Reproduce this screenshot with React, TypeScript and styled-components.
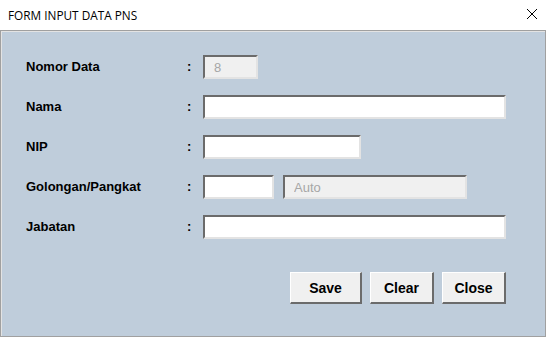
import React from 'react';
import styled, { createGlobalStyle } from 'styled-components';

const GlobalStyle = createGlobalStyle`
  html, body {
    margin: 0;
    padding: 0;
    background: #ffffff;
  }
  body {
    font-family: 'Liberation Sans', Arial, sans-serif;
  }
`;

const Window = styled.div`
  width: 546px;
  height: 337px;
  display: flex;
  flex-direction: column;
  background: #ffffff;
  overflow: hidden;
`;

const TitleBar = styled.div`
  height: 30px;
  flex: 0 0 30px;
  display: flex;
  align-items: center;
  justify-content: space-between;
  padding: 0 7px 0 8px;
  box-sizing: border-box;
`;

const Title = styled.span`
  font-family: 'Open Sans', 'Liberation Sans', sans-serif;
  font-size: 11.8px;
  color: #000;
  margin-top: -1px;
`;

const CloseX = styled.button`
  width: 14px;
  height: 14px;
  border: 0;
  padding: 0;
  background: transparent;
  margin-top: -2px;
  display: flex;
`;

const Panel = styled.div`
  flex: 1;
  background: #bfcddb;
  border: 1px solid #a0a0a0;
  box-shadow: inset 1px 1px 0 #e3e3e3;
  box-sizing: border-box;
  padding: 24px 39px 32px 25px;
  display: flex;
  flex-direction: column;
`;

const Form = styled.div`
  display: grid;
  grid-template-columns: 161px 16px 1fr;
  row-gap: 16px;
  align-items: center;
`;

const Label = styled.label`
  font-weight: bold;
  font-size: 13px;
  color: #000;
  margin-top: -2px;
`;

const Colon = styled.span`
  font-weight: bold;
  font-size: 13px;
  color: #000;
  margin-top: -2px;
`;

const FieldGroup = styled.div`
  display: flex;
  gap: 9px;
  height: 24px;
`;

const Input = styled.input<{ $w: number }>`
  width: ${p => p.$w}px;
  height: 24px;
  box-sizing: border-box;
  margin: 0;
  padding: 0 0 0 9px;
  font-family: 'Liberation Sans', Arial, sans-serif;
  font-size: 13px;
  color: #000;
  background: #ffffff;
  border-style: solid;
  border-width: 2px;
  border-color: #6b6b6b #e3e3e3 #e3e3e3 #6b6b6b;
  outline: none;

  &:disabled {
    background: #f0f0f0;
    color: #a6a6a6;
  }
`;

const ButtonRow = styled.div`
  margin-top: auto;
  display: flex;
  justify-content: flex-end;
  gap: 8px;
`;

const Button = styled.button<{ $w: number }>`
  width: ${p => p.$w}px;
  height: 32px;
  box-sizing: border-box;
  background: #f0f0f0;
  border-style: solid;
  border-width: 1px 2px 2px 1px;
  border-color: #ffffff #6b6b6b #6b6b6b #ffffff;
  font-family: 'Liberation Sans', Arial, sans-serif;
  font-weight: bold;
  font-size: 14px;
  color: #000;
  padding: 0;
`;

type Row = {
  label: string;
  fields: { w: number; value?: string; disabled?: boolean }[];
};

const rows: Row[] = [
  { label: 'Nomor Data', fields: [{ w: 55, value: '8', disabled: true }] },
  { label: 'Nama', fields: [{ w: 303 }] },
  { label: 'NIP', fields: [{ w: 158 }] },
  {
    label: 'Golongan/Pangkat',
    fields: [{ w: 71 }, { w: 184, value: 'Auto', disabled: true }],
  },
  { label: 'Jabatan', fields: [{ w: 303 }] },
];

const App: React.FC = () => {
  return (
    <>
      <GlobalStyle />
      <Window>
        <TitleBar>
          <Title>FORM INPUT DATA PNS</Title>
          <CloseX aria-label="Close">
            <svg width="14" height="14" viewBox="0 0 14 14">
              <path d="M2 2 L12 12 M12 2 L2 12" stroke="#000" strokeWidth="1" />
            </svg>
          </CloseX>
        </TitleBar>
        <Panel>
          <Form>
            {rows.map(row => (
              <React.Fragment key={row.label}>
                <Label>{row.label}</Label>
                <Colon>:</Colon>
                <FieldGroup>
                  {row.fields.map((f, i) => (
                    <Input
                      key={i}
                      $w={f.w}
                      defaultValue={f.value}
                      disabled={f.disabled}
                    />
                  ))}
                </FieldGroup>
              </React.Fragment>
            ))}
          </Form>
          <ButtonRow>
            <Button $w={72}>Save</Button>
            <Button $w={64}>Clear</Button>
            <Button $w={64}>Close</Button>
          </ButtonRow>
        </Panel>
      </Window>
    </>
  );
};

export default App;
